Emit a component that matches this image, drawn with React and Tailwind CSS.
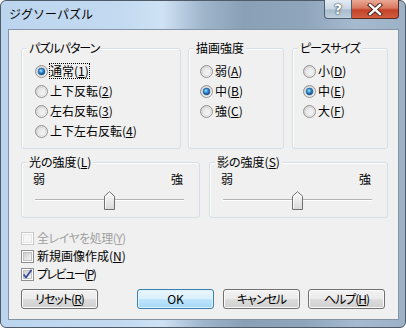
import React from "react";

function Radio({ checked }) {
  return (
    <svg width="13" height="13" viewBox="0 0 13 13" className="shrink-0">
      <defs>
        <linearGradient id="rg" x1="0" y1="0" x2="1" y2="1">
          <stop offset="0" stopColor="#cfcfcf" />
          <stop offset="1" stopColor="#fbfbfb" />
        </linearGradient>
        <linearGradient id="ri" x1="0" y1="0" x2="1" y2="1">
          <stop offset="0" stopColor="#e2e2e2" />
          <stop offset="1" stopColor="#f8f8f8" />
        </linearGradient>
        <radialGradient id="rd" cx="0.42" cy="0.38" r="0.65">
          <stop offset="0" stopColor="#a6e4ff" />
          <stop offset="0.45" stopColor="#2f8fd6" />
          <stop offset="1" stopColor="#0b3f78" />
        </radialGradient>
      </defs>
      <circle cx="6.5" cy="6.5" r="6" fill="url(#rg)" stroke="#929292" />
      <circle cx="6.5" cy="6.5" r="4.3" fill="url(#ri)" stroke="#d2d2d2" strokeWidth="0.7" />
      {checked && <circle cx="6.5" cy="6.5" r="3.4" fill="url(#rd)" stroke="#1b4f86" strokeWidth="0.5" />}
    </svg>
  );
}

function Check({ checked, disabled }) {
  return (
    <svg width="13" height="13" viewBox="0 0 13 13" className="shrink-0">
      <defs>
        <linearGradient id="cg" x1="0" y1="0" x2="1" y2="1">
          <stop offset="0" stopColor="#cbcbcb" />
          <stop offset="1" stopColor="#f7f7f7" />
        </linearGradient>
      </defs>
      <rect x="0.5" y="0.5" width="12" height="12" fill="#fff" stroke={disabled ? "#c9c9c9" : "#8e8f8f"} />
      <rect
        x="2.5"
        y="2.5"
        width="8"
        height="8"
        fill={disabled ? "#f5f5f5" : "url(#cg)"}
        stroke={disabled ? "#e6e6e6" : "#c2c2c2"}
      />
      {checked && (
        <path d="M2.6 6.4 L5 9.6 L10.6 1.8" stroke="#33499a" strokeWidth="1.7" fill="none" strokeLinejoin="round" />
      )}
    </svg>
  );
}

function Thumb() {
  return (
    <svg width="11" height="19" viewBox="0 0 11 19">
      <defs>
        <linearGradient id="tg" x1="0" y1="0" x2="0" y2="1">
          <stop offset="0" stopColor="#fbfbfb" />
          <stop offset="1" stopColor="#d9d9d9" />
        </linearGradient>
      </defs>
      <path d="M0.5 18.5 L0.5 5.2 L5.5 0.7 L10.5 5.2 L10.5 18.5 Z" fill="url(#tg)" stroke="#707070" />
      <path d="M1.5 17.5 L1.5 5.6 L5.5 2 L9.5 5.6" fill="none" stroke="#ffffff" strokeWidth="0.8" />
    </svg>
  );
}

function Group({ title, className, children }) {
  return (
    <div className={`relative rounded-[3px] border border-[#d5dfe5] shadow-[inset_1px_1px_0_#ffffff] ${className}`}>
      <span className="absolute -top-[8px] left-[5px] bg-[#f0f0f0] px-[2px] leading-[14px] whitespace-nowrap">{title}</span>
      {children}
    </div>
  );
}

function RadioRow({ checked, focus, children }) {
  return (
    <div className="flex h-[20px] items-center gap-[2px]">
      <Radio checked={checked} />
      <span className={`leading-[14px] whitespace-nowrap ${focus ? "outline-1 outline-dotted outline-black outline-offset-0" : ""}`}>
        {children}
      </span>
    </div>
  );
}

function Slider({ title, className }) {
  return (
    <Group title={title} className={`h-[56px] w-[179px] ${className || ""}`}>
      <div className="flex justify-between pl-[11px] pr-[16px] pt-[9px] leading-[14px]">
        <span>弱</span>
        <span>強</span>
      </div>
      <div className="relative ml-[13px] mt-[5px] h-[19px] w-[149px]">
        <div className="absolute left-0 right-0 top-[8px] h-[1px] bg-[#b4b4b4]" />
        <div className="absolute left-0 right-0 top-[9px] h-[1px] bg-[#ffffff]" />
        <div className="absolute left-[69px] top-0">
          <Thumb />
        </div>
      </div>
    </Group>
  );
}

function Btn({ children, def }) {
  return (
    <div
      className={`flex h-[20px] w-[77px] items-center justify-center rounded-[3px] border leading-[14px] ${
        def
          ? "border-[#3c7fb1] bg-[linear-gradient(#eaf6fd_0%,#d9f0fc_50%,#bee6fd_50%,#a7d9f5_100%)] shadow-[inset_0_0_0_1px_#dff3fc]"
          : "border-[#707070] bg-[linear-gradient(#f2f2f2_0%,#ebebeb_50%,#dddddd_50%,#cfcfcf_100%)] shadow-[inset_0_0_0_1px_#fbfbfb]"
      }`}
    >
      {children}
    </div>
  );
}

export default function App() {
  return (
    <div className="w-[406px] h-[328px] overflow-hidden bg-white font-['Noto_Sans_CJK_JP',sans-serif] text-[12px] text-black">
      <div className="flex h-[328px] w-[406px] flex-col rounded-[6px] border border-[#4d5b6a] bg-[linear-gradient(90deg,#bcd5ee_0%,#c3daf1_30%,#cfe2f4_40%,#9fb5cb_50%,#8aa0b7_60%,#8fa5bc_75%,#a6bacf_88%,#9db1c6_100%)]">
        <div className="flex h-[28px] items-start">
          <span className="pl-[8px] pt-[6px] leading-[14px] text-[12px] text-black">ジグソーパズル</span>
          <div className="ml-auto mr-[6px] -mt-[1px] flex">
            <div className="flex h-[19px] w-[28px] items-center justify-center rounded-bl-[4px] border border-t-0 border-[#4f5e6e] bg-[linear-gradient(#e3ebf3_0%,#c9d6e3_50%,#a9bccd_55%,#bfd0de_100%)]">
              <span className="font-['DejaVu_Sans',sans-serif] text-[14px] font-bold leading-[14px] text-white [text-shadow:0_0_1px_#1c2a38,0_0_2px_#1c2a38]">?</span>
            </div>
            <div className="flex h-[19px] w-[47px] items-center justify-center rounded-br-[4px] border border-l-0 border-t-0 border-[#5e2a20] bg-[linear-gradient(#e9a995_0%,#d9775e_45%,#c2432a_55%,#d45e3f_100%)]">
              <svg width="16" height="13" viewBox="0 0 16 13">
                <path d="M3 2 L13 11 M13 2 L3 11" stroke="#3b1a14" strokeWidth="4.2" strokeLinecap="square" />
                <path d="M3 2 L13 11 M13 2 L3 11" stroke="#ffffff" strokeWidth="2.4" strokeLinecap="square" />
              </svg>
            </div>
          </div>
        </div>
        <div className="mb-[7px] ml-[7px] mr-[6px] flex flex-1 flex-col border border-[#8395a7] bg-[#f0f0f0] pl-[12px] [font-feature-settings:'palt']">
          <div className="mt-[18px] flex">
            <Group title={<span className="tracking-[-1px]">パズルパターン</span>} className="h-[101px] w-[160px]">
              <div className="pl-[13px] pt-[12px]">
                <RadioRow checked focus>
                  通常(<u>1</u>)
                </RadioRow>
                <RadioRow>
                  上下反転(<u>2</u>)
                </RadioRow>
                <RadioRow>
                  左右反転(<u>3</u>)
                </RadioRow>
                <RadioRow>
                  上下左右反転(<u>4</u>)
                </RadioRow>
              </div>
            </Group>
            <Group title="描画強度" className="ml-[7px] h-[101px] w-[96px]">
              <div className="pl-[11px] pt-[12px]">
                <RadioRow>
                  弱(<u>A</u>)
                </RadioRow>
                <RadioRow checked>
                  中(<u>B</u>)
                </RadioRow>
                <RadioRow>
                  強(<u>C</u>)
                </RadioRow>
              </div>
            </Group>
            <Group title={<span className="tracking-[-1px]">ピースサイズ</span>} className="ml-[8px] h-[101px] w-[96px]">
              <div className="pl-[10px] pt-[12px]">
                <RadioRow>
                  小(<u>D</u>)
                </RadioRow>
                <RadioRow checked>
                  中(<u>E</u>)
                </RadioRow>
                <RadioRow>
                  大(<u>F</u>)
                </RadioRow>
              </div>
            </Group>
          </div>
          <div className="mt-[13px] flex">
            <Slider
              title={
                <>
                  光の強度(<u>L</u>)
                </>
              }
            />
            <Slider
              className="ml-[9px]"
              title={
                <>
                  影の強度(<u>S</u>)
                </>
              }
            />
          </div>
          <div className="mt-[11px] flex flex-col">
            <div className="flex h-[18px] items-center gap-[3px] text-[#a0a0a0]">
              <Check disabled />
              <span className="leading-[14px] tracking-[-0.5px]">
                全レイヤを処理(<u>Y</u>)
              </span>
            </div>
            <div className="flex h-[18px] items-center gap-[3px]">
              <Check />
              <span className="leading-[14px]">
                新規画像作成(<u>N</u>)
              </span>
            </div>
            <div className="flex h-[18px] items-center gap-[3px]">
              <Check checked />
              <span className="leading-[14px] tracking-[-1.5px]">
                プレビュー(<u>P</u>)
              </span>
            </div>
          </div>
          <div className="mt-[6px] flex">
            <Btn>
              <span className="tracking-[-1px]">
                リセット(<u>R</u>)
              </span>
            </Btn>
            <div className="ml-[39px]">
              <Btn def>OK</Btn>
            </div>
            <div className="ml-[9px]">
              <Btn>
                <span className="tracking-[-1px]">キャンセル</span>
              </Btn>
            </div>
            <div className="ml-[8px]">
              <Btn>
                <span className="tracking-[-1px]">
                  ヘルプ(<u>H</u>)
                </span>
              </Btn>
            </div>
          </div>
        </div>
      </div>
    </div>
  );
}
